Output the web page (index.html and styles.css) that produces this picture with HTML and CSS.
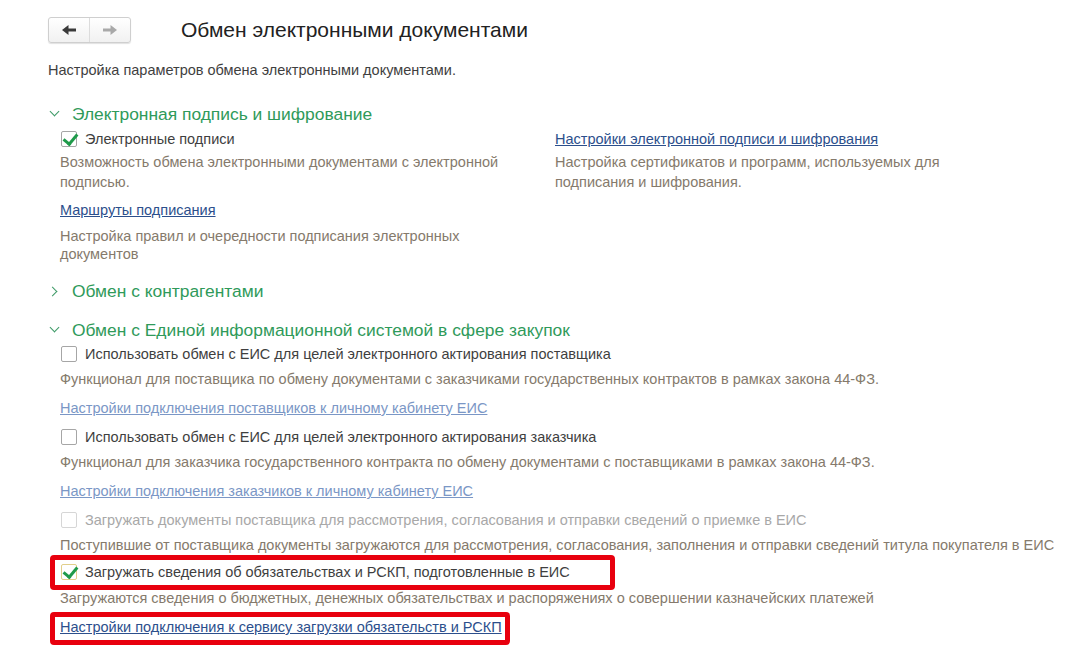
FILE: index.html
```html
<!DOCTYPE html>
<html lang="ru">
<head>
<meta charset="utf-8">
<title>Обмен электронными документами</title>
<link rel="stylesheet" href="styles.css">
</head>
<body>
<div class="page">
  <header class="topbar">
    <div class="nav">
      <button class="nav-btn back" aria-label="Назад">
        <svg width="16" height="12" viewBox="0 0 16 12"><path d="M15 6H6" stroke="#3a3a3a" stroke-width="3"/><path d="M1 6L7.5 1V11Z" fill="#3a3a3a"/></svg>
      </button>
      <button class="nav-btn fwd" aria-label="Вперёд">
        <svg width="16" height="12" viewBox="0 0 16 12"><path d="M1 6H10" stroke="#a9a9a9" stroke-width="3"/><path d="M15 6L8.5 1V11Z" fill="#a9a9a9"/></svg>
      </button>
    </div>
    <h1 class="title">Обмен электронными документами</h1>
  </header>

  <p class="subtitle">Настройка параметров обмена электронными документами.</p>

  <section class="group">
    <h2 class="group-head"><span class="chev down"></span>Электронная подпись и шифрование</h2>
    <div class="cols">
      <div class="col left">
        <label class="cb-row"><span class="cb checked"></span>Электронные подписи</label>
        <p class="desc after-cb">Возможность обмена электронными документами с электронной подписью.</p>
        <a class="link dark after-desc" href="#">Маршруты подписания</a>
        <p class="desc after-link">Настройка правил и очередности подписания электронных документов</p>
      </div>
      <div class="col right">
        <a class="link dark" href="#">Настройки электронной подписи и шифрования</a>
        <p class="desc after-cb">Настройка сертификатов и программ, используемых для подписания и шифрования.</p>
      </div>
    </div>
  </section>

  <section class="group collapsed">
    <h2 class="group-head"><span class="chev right"></span>Обмен с контрагентами</h2>
  </section>

  <section class="group eis">
    <h2 class="group-head"><span class="chev down"></span>Обмен с Единой информационной системой в сфере закупок</h2>
    <div class="rows">
      <label class="cb-row"><span class="cb"></span>Использовать обмен с ЕИС для целей электронного актирования поставщика</label>
      <p class="desc after-cb">Функционал для поставщика по обмену документами с заказчиками государственных контрактов в рамках закона 44-ФЗ.</p>
      <a class="link light after-desc" href="#">Настройки подключения поставщиков к личному кабинету ЕИС</a>
      <label class="cb-row after-link"><span class="cb"></span>Использовать обмен с ЕИС для целей электронного актирования заказчика</label>
      <p class="desc after-cb">Функционал для заказчика государственного контракта по обмену документами с поставщиками в рамках закона 44-ФЗ.</p>
      <a class="link light after-desc" href="#">Настройки подключения заказчиков к личному кабинету ЕИС</a>
      <label class="cb-row disabled after-link"><span class="cb"></span>Загружать документы поставщика для рассмотрения, согласования и отправки сведений о приемке в ЕИС</label>
      <p class="desc after-cb">Поступившие от поставщика документы загружаются для рассмотрения, согласования, заполнения и отправки сведений титула покупателя в ЕИС</p>
      <div class="mark-wrap cb-mark">
        <label class="cb-row marked"><span class="cb checked focus"></span>Загружать сведения об обязательствах и РСКП, подготовленные в ЕИС</label>
      </div>
      <p class="desc after-mark">Загружаются сведения о бюджетных, денежных обязательствах и распоряжениях о совершении казначейских платежей</p>
      <div class="mark-wrap link-mark">
        <a class="link dark marked" href="#">Настройки подключения к сервису загрузки обязательств и РСКП</a>
      </div>
    </div>
  </section>
</div>
</body>
</html>
```

FILE: styles.css
```css
* { box-sizing: border-box; }
html, body { margin: 0; padding: 0; background: #fff; }
body {
  font-family: "Liberation Sans", Arial, sans-serif;
  font-size: 14.5px;
  color: #3f3f3f;
}
.page { padding: 17px 0 0 48px; }

.topbar { display: flex; align-items: center; height: 26px; }
.nav {
  display: flex;
  width: 83px;
  height: 26px;
  border: 1px solid #cfcfcf;
  border-radius: 3px;
  background: linear-gradient(#ffffff, #f1f1f1);
  box-shadow: 0 1px 1px rgba(0,0,0,0.12);
}
.nav-btn {
  flex: 1;
  border: 0;
  background: transparent;
  padding: 0;
  display: flex;
  align-items: center;
  justify-content: center;
}
.nav-btn.back { border-right: 1px solid #dcdcdc; }
.title {
  margin: 0 0 0 50px;
  font-size: 21px;
  font-weight: normal;
  color: #222;
  line-height: 26px;
}

.subtitle { margin: 17px 0 0; line-height: 20px; color: #3f3f3f; }

.group-head {
  margin: 0;
  font-size: 17.4px;
  font-weight: normal;
  color: #2f9a5a;
  line-height: 22px;
  display: flex;
  align-items: center;
}
.group { margin-top: 17px; }
.group:first-of-type { margin-top: 23px; }
.chev {
  display: inline-block;
  width: 7px;
  height: 7px;
  border-right: 1.6px solid #3d9a66;
  border-bottom: 1.6px solid #3d9a66;
  margin-right: 14px;
}
.chev.down { transform: rotate(45deg); margin-left: 3px; margin-top: -5px; }
.chev.right { transform: rotate(-45deg); margin-left: 1px; margin-right: 16px; }

.cols { display: grid; grid-template-columns: 495px 420px; margin-top: 4px; padding-left: 12px; }
.col { display: flex; flex-direction: column; align-items: flex-start; }
.rows { display: flex; flex-direction: column; align-items: flex-start; margin-top: 3px; padding-left: 12px; }

.cb-row { display: flex; align-items: center; line-height: 20px; height: 20px; color: #3f3f3f; }
.cb {
  width: 16px; height: 16px;
  border: 1px solid #a6a6a6;
  border-radius: 2px;
  background: #fff;
  margin: 0 8px 0 1px;
  position: relative;
  flex: none;
}
.cb.checked::after {
  content: "";
  position: absolute;
  left: 4px; top: -1px;
  width: 6px; height: 11px;
  border-right: 3px solid #1f9a4a;
  border-bottom: 3px solid #1f9a4a;
  transform: rotate(40deg);
}
.cb.focus { border-color: #e2cf8a; }
.cb-row.disabled { color: #a8a8a8; }
.cb-row.disabled .cb { border-color: #d6d6d6; }

.desc { margin: 0; line-height: 20px; color: #857a6c; }
.col.left .desc { max-width: 472px; }
.col.right .desc { max-width: 400px; }
.link { line-height: 20px; text-decoration: underline; }
.link.dark { color: #2c4f8c; }
.link.light { color: #7b97c6; }

.after-cb { margin-top: 3px; }
.after-desc { margin-top: 8px; }
.after-link { margin-top: 9px; }
.col .after-link { margin-top: 7px; line-height: 18px; }
.rows .after-cb { margin-top: 5px; }
.rows .after-desc { margin-top: 9px; }
.after-mark { margin-top: -2px; }

.mark-wrap {
  border: 5px solid #e8000e;
  border-radius: 4px;
  margin-left: -10px;
}
.cb-mark { padding: 2px 40px 3px 5px; }
.link-mark { margin-top: 4px; padding: 0 3px 3px 5px; }
```
